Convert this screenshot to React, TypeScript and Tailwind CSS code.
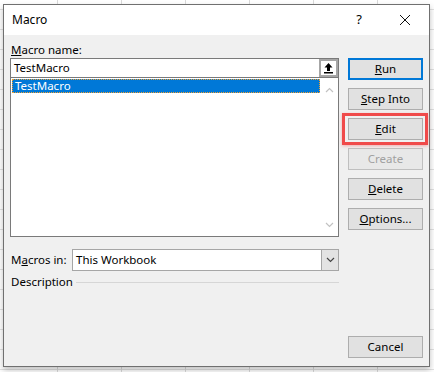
const font = { fontFamily: '"Noto Sans", "Open Sans", sans-serif' };

function Btn({
  children,
  primary,
  disabled,
  className = '',
}: {
  children: React.ReactNode;
  primary?: boolean;
  disabled?: boolean;
  className?: string;
}) {
  return (
    <div
      className={`flex h-[22px] items-center justify-center bg-[#e1e1e1] text-[11.5px] leading-none ${
        primary ? 'border-2 border-[#0078d7]' : 'border border-[#adadad]'
      } ${disabled ? 'text-[#a0a0a0] border-[#bfbfbf] bg-[#e8e8e8]' : 'text-black'} ${className}`}
    >
      {children}
    </div>
  );
}

function Chevron({ up, color = '#c2c2c2' }: { up?: boolean; color?: string }) {
  return (
    <svg width="9" height="6" viewBox="0 0 9 6">
      <path
        d={up ? 'M1 5 L4.5 1.5 L8 5' : 'M1 1 L4.5 4.5 L8 1'}
        fill="none"
        stroke={color}
        strokeWidth="1.2"
      />
    </svg>
  );
}

export default function App() {
  return (
    <div
      style={font}
      className="h-[372px] w-[434px] overflow-hidden bg-white bg-[linear-gradient(to_right,#dadada_1px,transparent_1px),linear-gradient(to_bottom,#e2e2e2_1px,transparent_1px)] bg-[size:64px_20px] bg-[position:57px_9px] pl-[3px] pt-[4px]"
    >
      <div className="flex h-[363px] w-[427px] flex-col border border-[#707070] shadow-[0_3px_6px_rgba(0,0,0,0.25)]">
        <div className="flex h-[30px] items-center bg-white pl-[8px] text-[12px] text-black">
          <span>Macro</span>
          <span className="ml-auto mr-[37px] text-[13px]">?</span>
          <svg width="12" height="12" viewBox="0 0 12 12" className="mr-[18px]">
            <path d="M1 1 L11 11 M11 1 L1 11" stroke="#111" strokeWidth="1" />
          </svg>
        </div>

        <div className="flex flex-1 bg-[#f0f0f0] pl-[6px] pr-[6px] pt-[7px] pb-[8px] text-[11.5px] text-black">
          <div className="flex w-[329px] flex-col">
            <div className="h-[16px] pl-[1px] leading-[16px]">
              <u>M</u>acro name:
            </div>
            <div className="flex h-[19px] border border-b-0 border-[#7a7a7a] bg-white">
              <div className="flex flex-1 items-center pl-[3px] leading-none">TestMacro</div>
              <div className="flex w-[19px] items-center justify-center border-2 border-[#a6a6a6] bg-white">
                <svg width="11" height="12" viewBox="0 0 11 12">
                  <path d="M5.5 1 L1.5 5.5 H4 V9 H7 V5.5 H9.5 Z" fill="#000" />
                  <rect x="1" y="10" width="9" height="1.5" fill="#000" />
                </svg>
              </div>
            </div>
            <div className="flex h-[160px] border border-[#7a7a7a] bg-white">
              <div className="flex-1 p-[1px]">
                <div className="flex h-[14px] items-center border border-dotted border-[#f0a030] bg-[#0078d7] pl-[2px] leading-none text-white">
                  TestMacro
                </div>
              </div>
              <div className="flex w-[17px] flex-col items-center justify-between pb-[8px] pt-[9px]">
                <Chevron up />
                <Chevron />
              </div>
            </div>

            <div className="mt-[12px] flex h-[22px] items-center">
              <div className="w-[62px] pl-[1px]">
                M<u>a</u>cros in:
              </div>
              <div className="flex h-[22px] flex-1 border border-[#a6a6a6] bg-white">
                <div className="flex flex-1 items-center pl-[3px] leading-none">This Workbook</div>
                <div className="flex w-[17px] items-center justify-center border-l border-[#a6a6a6] bg-[#e3e3e3]">
                  <Chevron color="#444" />
                </div>
              </div>
            </div>

            <div className="mt-[3px] flex h-[16px] items-center">
              <span className="pl-[1px]">Description</span>
              <div className="ml-[3px] h-px flex-1 bg-[#d6d6d6]" />
            </div>
          </div>

          <div className="ml-[9px] flex w-[75px] flex-col gap-[8px] pt-[16px]">
            <Btn primary>
              <u>R</u>un
            </Btn>
            <Btn>
              <u>S</u>tep Into
            </Btn>
            <div className="relative">
              <div className="absolute -bottom-[5px] -left-[6px] -right-[5px] -top-[5px] border-[3px] border-[#f04a4a] shadow-[0_1px_3px_rgba(240,74,74,0.4)]" />
              <Btn>
                <u>E</u>dit
              </Btn>
            </div>
            <Btn disabled>Create</Btn>
            <Btn>
              <u>D</u>elete
            </Btn>
            <Btn>
              <u>O</u>ptions...
            </Btn>
            <Btn className="mt-auto">Cancel</Btn>
          </div>
        </div>
      </div>
    </div>
  );
}
